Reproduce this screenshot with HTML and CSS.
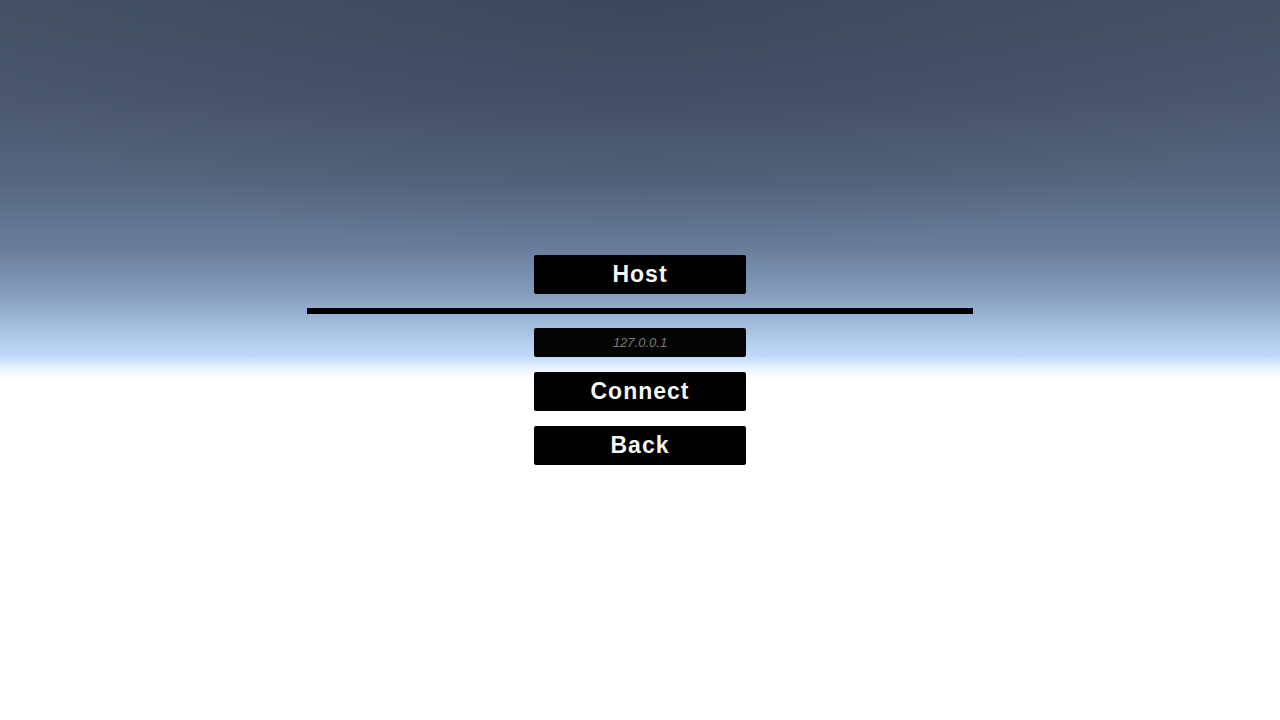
FILE: index.html
```html
<!DOCTYPE html>
<html lang="en">
<head>
<meta charset="utf-8">
<title>Network Menu</title>
<link rel="stylesheet" href="styles.css">
</head>
<body>
  <main class="scene">
    <div class="menu">
      <button class="btn">Host</button>
      <div class="divider"></div>
      <div class="field"><span class="placeholder">127.0.0.1</span></div>
      <button class="btn btn-connect">Connect</button>
      <button class="btn">Back</button>
    </div>
  </main>
</body>
</html>
```
FILE: styles.css
```css
html, body {
  margin: 0;
  padding: 0;
  height: 100%;
}

body {
  font-family: "Liberation Sans", Arial, sans-serif;
  overflow: hidden;
}

/* sky gradient fading to a bright horizon */
.scene {
  width: 1280px;
  height: 720px;
  display: flex;
  align-items: center;
  justify-content: center;
  background:
    radial-gradient(ellipse 700px 260px at 50% 0%, rgba(40, 52, 70, 0.35), rgba(40, 52, 70, 0) 100%),
    linear-gradient(to bottom,
      #445267 0px,
      #4a586f 100px,
      #56667f 180px,
      #6a7e9c 250px,
      #7f96b6 285px,
      #99b2d3 315px,
      #b3cbeb 340px,
      #c0d9fa 356px,
      #d9eafd 364px,
      #f4f9ff 372px,
      #ffffff 380px,
      #ffffff 720px);
}

.menu {
  width: 666px;
  display: flex;
  flex-direction: column;
  align-items: center;
}

.btn {
  width: 212px;
  height: 39px;
  margin: 0;
  padding: 0;
  border: none;
  border-radius: 2px;
  background: #000;
  color: #f6f6f6;
  font-family: "Liberation Sans", Arial, sans-serif;
  font-weight: bold;
  font-size: 23px;
  letter-spacing: 1px;
  line-height: 39px;
  cursor: pointer;
}

.divider {
  width: 666px;
  height: 6px;
  background: #000;
  margin: 14px 0;
}

.field {
  width: 212px;
  height: 29px;
  border-radius: 2px;
  background: #050505;
  display: flex;
  align-items: center;
  justify-content: center;
  margin-bottom: 15px;
}

.placeholder {
  font-style: italic;
  font-size: 13px;
  color: #7a7a7a;
}

.btn-connect {
  margin-bottom: 15px;
}
```
